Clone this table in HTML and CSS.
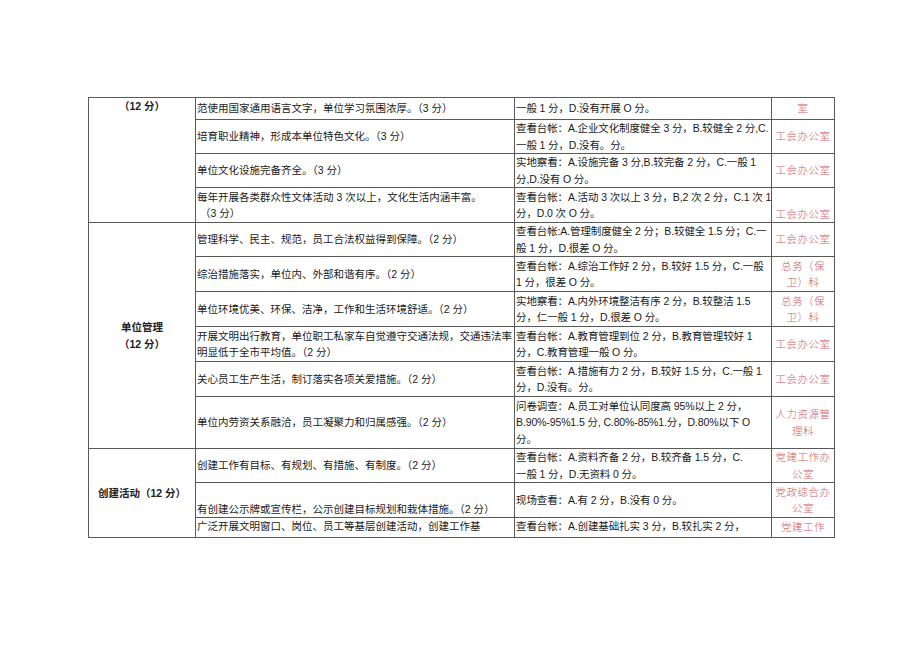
FILE: index.html
```html
<!DOCTYPE html>
<html lang="zh-CN">
<head>
<meta charset="utf-8">
<title>评分表</title>
<link rel="stylesheet" href="styles.css">
</head>
<body>
<div class="page">
<table class="score">
  <colgroup>
    <col class="c1"><col class="c2"><col class="c3"><col class="c4">
  </colgroup>
  <tbody>
    <tr class="h22">
      <td class="cat top" rowspan="4">（12 分）</td>
      <td class="item">范使用国家通用语言文字，单位学习氛围浓厚。（3 分）</td>
      <td class="std">一般 1 分，D.没有开展 O 分。</td>
      <td class="dept">室</td>
    </tr>
    <tr class="h34">
      <td class="item">培育职业精神，形成本单位特色文化。（3 分）</td>
      <td class="std">查看台帐：A.企业文化制度健全 3 分，B.较健全 2 分,C.<br>一般 1 分，D.没有。分。</td>
      <td class="dept">工会办公室</td>
    </tr>
    <tr class="h34">
      <td class="item">单位文化设施完备齐全。（3 分）</td>
      <td class="std">实地察看：A.设施完备 3 分,B.较完备 2 分，C.一般 1<br>分,D.没有 O 分。</td>
      <td class="dept">工会办公室</td>
    </tr>
    <tr class="h35">
      <td class="item">每年开展各类群众性文体活动 3 次以上，文化生活内涵丰富。<br>&nbsp;（3 分）</td>
      <td class="std">查看台帐：A.活动 3 次以上 3 分，B,2 次 2 分，C.1 次 1<br>分，D.0 次 O 分。</td>
      <td class="dept bottom">工会办公室</td>
    </tr>
    <tr class="h34">
      <td class="cat mid" rowspan="6">单位管理<br>（12 分）</td>
      <td class="item">管理科学、民主、规范，员工合法权益得到保障。（2 分）</td>
      <td class="std">查看台帐:A.管理制度健全 2 分；B.较健全 1.5 分；C.一<br>般 1 分，D.很差 O 分。</td>
      <td class="dept">工会办公室</td>
    </tr>
    <tr class="h35">
      <td class="item">综治措施落实，单位内、外部和谐有序。（2 分）</td>
      <td class="std">查看台帐：A.综治工作好 2 分，B.较好 1.5 分，C.一般<br>1 分，很差 O 分。</td>
      <td class="dept">总务（保<br>卫）科</td>
    </tr>
    <tr class="h35">
      <td class="item">单位环境优美、环保、洁净，工作和生活环境舒适。（2 分）</td>
      <td class="std">实地察看：A.内外环境整洁有序 2 分，B.较整洁 1.5<br>分，仁一般 1 分，D.很差 O 分。</td>
      <td class="dept">总务（保<br>卫）科</td>
    </tr>
    <tr class="h35">
      <td class="item">开展文明出行教育，单位职工私家车自觉遵守交通法规，交通违法率<br>明显低于全市平均值。（2 分）</td>
      <td class="std">查看台帐：A.教育管理到位 2 分，B.教育管理较好 1<br>分，C.教育管理一般 O 分。</td>
      <td class="dept">工会办公室</td>
    </tr>
    <tr class="h35">
      <td class="item">关心员工生产生活，制订落实各项关爱措施。（2 分）</td>
      <td class="std">查看台帐：A.措施有力 2 分，B.较好 1.5 分，C.一般 1<br>分，D.没有。分。</td>
      <td class="dept">工会办公室</td>
    </tr>
    <tr class="h52">
      <td class="item">单位内劳资关系融洽，员工凝聚力和归属感强。（2 分）</td>
      <td class="std">问卷调查：A.员工对单位认同度高 95%以上 2 分，<br>B.90%-95%1.5 分, C.80%-85%1.分，D.80%以下 O<br>分。</td>
      <td class="dept middle">人力资源管<br>理科</td>
    </tr>
    <tr class="h34">
      <td class="cat mid" rowspan="3">创建活动（12 分）</td>
      <td class="item">创建工作有目标、有规划、有措施、有制度。（2 分）</td>
      <td class="std">查看台帐：A.资料齐备 2 分，B.较齐备 1.5 分，C.<br>一般 1 分，D.无资料 0 分。</td>
      <td class="dept">党建工作办<br>公室</td>
    </tr>
    <tr class="h35">
      <td class="item bottom">有创建公示牌或宣传栏，公示创建目标规划和栽体措施。（2 分）</td>
      <td class="std middle">现场查看：A.有 2 分，B.没有 0 分。</td>
      <td class="dept">党政综合办<br>公室</td>
    </tr>
    <tr class="h20">
      <td class="item top">广泛开展文明窗口、岗位、员工等基层创建活动，创建工作基</td>
      <td class="std top">查看台帐：A.创建基础扎实 3 分，B.较扎实 2 分，</td>
      <td class="dept">党建工作</td>
    </tr>
  </tbody>
</table>
</div>
</body>
</html>
```
FILE: styles.css
```css
html, body {
  margin: 0;
  padding: 0;
  background: #ffffff;
}

.page {
  padding: 97px 0 0 88px;
}

.score {
  border-collapse: collapse;
  table-layout: fixed;
  width: 746px;
  font-family: "Liberation Sans", "Noto Sans CJK SC", sans-serif;
  font-size: 10.5px;
  line-height: 16.5px;
  color: #1a1a1a;
}

.c1 { width: 107px; }
.c2 { width: 319px; }
.c3 { width: 257px; }
.c4 { width: 63px; }

.score td {
  border: 1px solid #5a5a5a;
  padding: 0 1px;
  vertical-align: middle;
  white-space: nowrap;
  overflow: hidden;
}

.h20 { height: 20px; }
.h22 { height: 22px; }
.h34 { height: 34px; }
.h35 { height: 35px; }
.h52 { height: 52px; }

.cat {
  text-align: center;
  font-weight: 700;
  color: #222;
}

.item {
  padding-left: 1px;
}

.std {
  vertical-align: top;
  padding-left: 1px;
  letter-spacing: -0.12px;
}

.dept {
  text-align: center;
  vertical-align: top;
  color: #cc5c66;
  font-weight: 300;
  letter-spacing: 0.5px;
}

.score td.top { vertical-align: top; }
.score td.bottom { vertical-align: bottom; }
.score td.middle { vertical-align: middle; }
```
